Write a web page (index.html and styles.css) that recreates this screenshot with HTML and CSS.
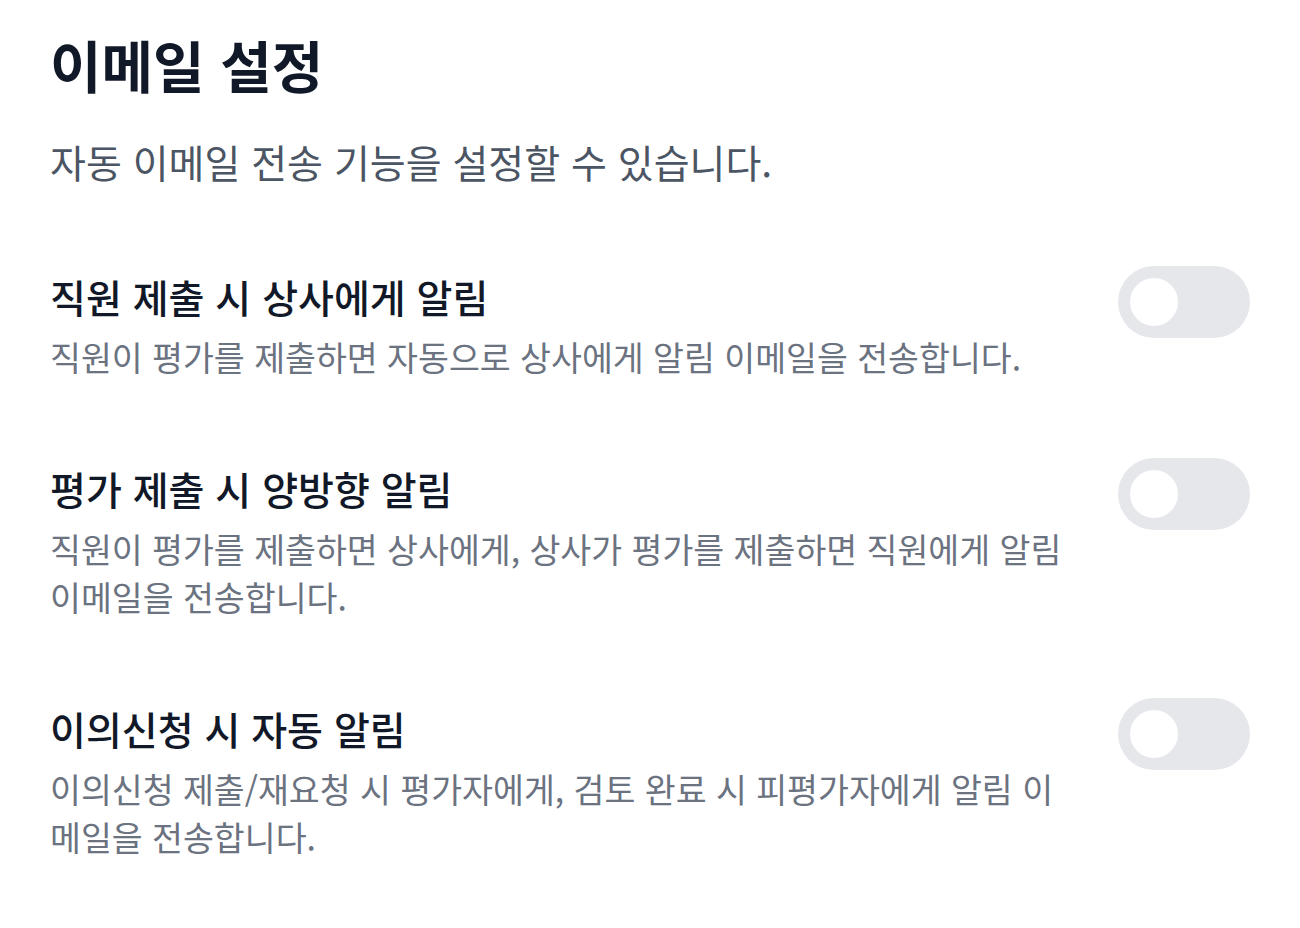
FILE: index.html
```html
<!DOCTYPE html>
<html lang="ko">
<head>
    <meta charset="UTF-8">
    <meta name="viewport" content="width=device-width, initial-scale=1.0">
    <title>이메일 설정</title>
    <link rel="stylesheet" href="styles.css">
</head>
<body>
    <div class="page">
        <h1 class="title">이메일 설정</h1>
        <p class="subtitle">자동 이메일 전송 기능을 설정할 수 있습니다.</p>

        <div class="settings">
            <div class="setting-row">
                <div class="setting-text">
                    <h3>직원 제출 시 상사에게 알림</h3>
                    <p>직원이 평가를 제출하면 자동으로 상사에게 알림 이메일을 전송합니다.</p>
                </div>
                <label class="toggle">
                    <input type="checkbox">
                    <span class="knob"></span>
                </label>
            </div>

            <div class="setting-row">
                <div class="setting-text">
                    <h3>평가 제출 시 양방향 알림</h3>
                    <p>직원이 평가를 제출하면 상사에게, 상사가 평가를 제출하면 직원에게 알림 이메일을 전송합니다.</p>
                </div>
                <label class="toggle">
                    <input type="checkbox">
                    <span class="knob"></span>
                </label>
            </div>

            <div class="setting-row">
                <div class="setting-text">
                    <h3>이의신청 시 자동 알림</h3>
                    <p>이의신청 제출/재요청 시 평가자에게, 검토 완료 시 피평가자에게 알림 이메일을 전송합니다.</p>
                </div>
                <label class="toggle">
                    <input type="checkbox">
                    <span class="knob"></span>
                </label>
            </div>
        </div>
    </div>
</body>
</html>
```

FILE: styles.css
```css
body {
    margin: 0;
    background-color: #ffffff;
    font-family: "Noto Sans CJK KR", "Noto Sans", sans-serif;
}
.page {
    padding: 24px 50px 20px 50px;
}
.title {
    margin: 0;
    font-size: 56px;
    line-height: 80px;
    font-weight: 700;
    color: #111827;
}
.subtitle {
    margin: 29px 0 0;
    font-size: 39px;
    line-height: 56px;
    color: #4b5563;
}
.settings {
    margin-top: 77px;
}
.setting-row {
    display: flex;
    justify-content: space-between;
    align-items: flex-start;
    margin-bottom: 77px;
}
.setting-row:last-child {
    margin-bottom: 0;
}
.setting-text {
    flex: 1;
    margin-right: 48px;
}
.setting-text h3 {
    margin: 0;
    font-size: 39px;
    line-height: 60px;
    font-weight: 500;
    color: #111827;
}
.setting-text p {
    margin: 7px 0 0;
    font-size: 33.6px;
    line-height: 48px;
    color: #6b7280;
}
.toggle {
    position: relative;
    display: block;
    width: 132px;
    height: 72px;
    flex-shrink: 0;
    border-radius: 36px;
    background-color: #e5e7eb;
    cursor: pointer;
}
.toggle input {
    display: none;
}
.knob {
    position: absolute;
    top: 12px;
    left: 12px;
    width: 48px;
    height: 48px;
    border-radius: 50%;
    background-color: #ffffff;
}
```
